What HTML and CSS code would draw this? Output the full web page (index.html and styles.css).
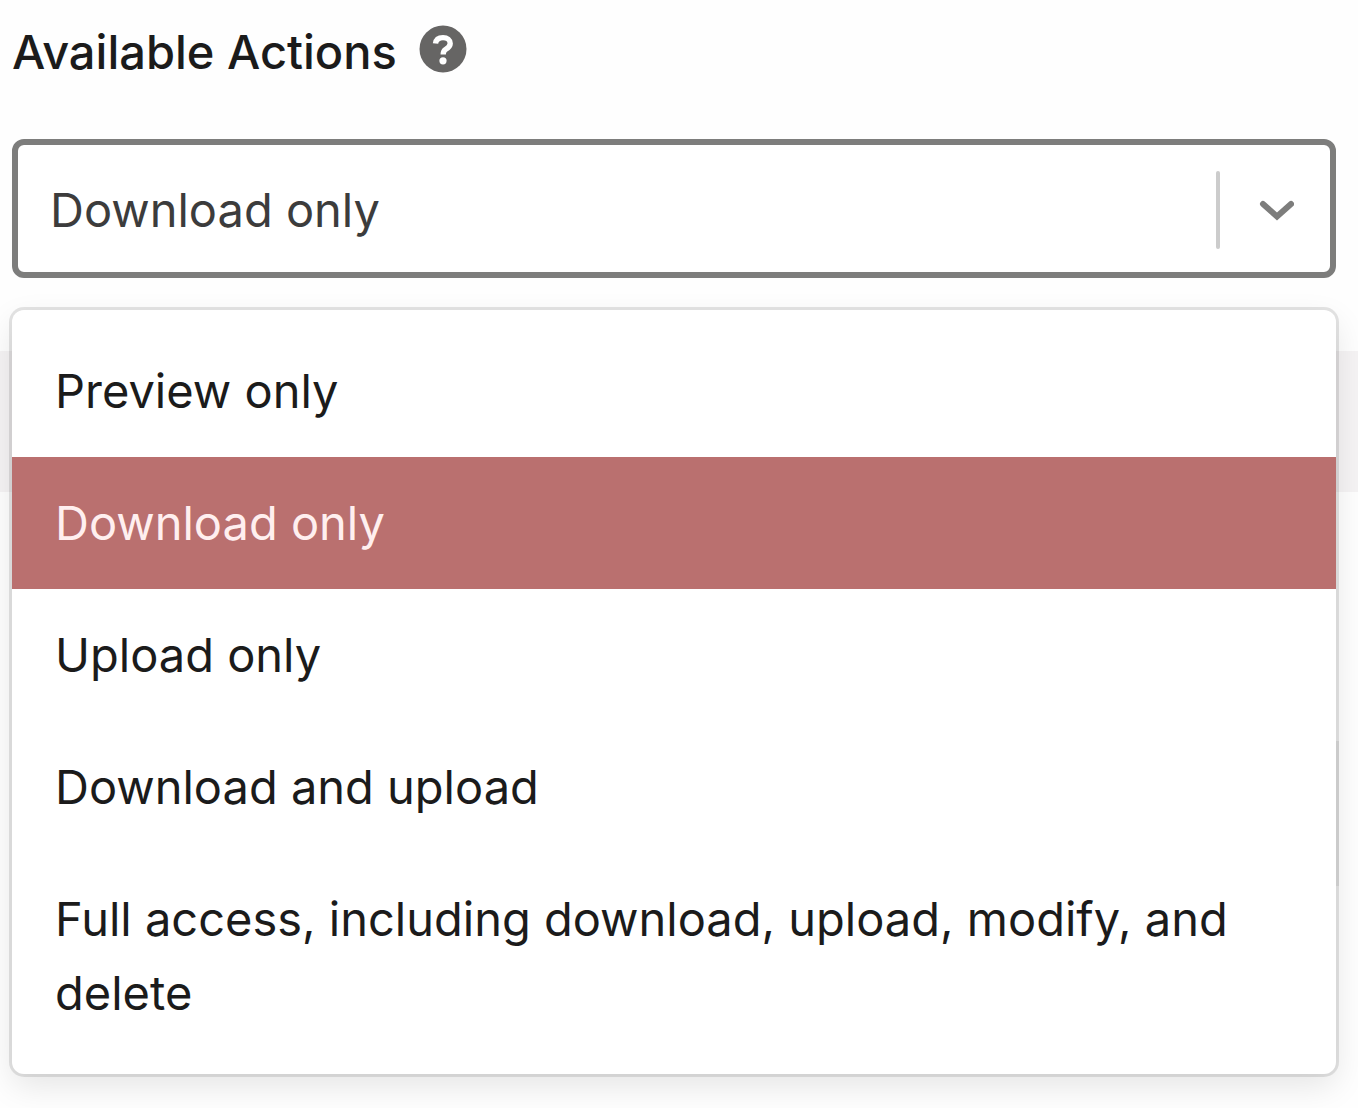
FILE: index.html
```html
<!DOCTYPE html>
<html lang="en">
<head>
<meta charset="utf-8">
<meta name="viewport" content="width=device-width, initial-scale=1">
<title>Available Actions</title>
<link rel="stylesheet" href="styles.css">
</head>
<body>
<main class="form">
  <div class="field">
    <div class="field-head">
      <label class="field-label" for="actions">Available Actions</label>
      <button class="help" type="button" aria-label="Help">
        <svg viewBox="0 0 48 48" aria-hidden="true">
          <circle cx="24" cy="24" r="23.5" fill="#666564"/>
          <path d="M16.5 18.5C17 14.2 19.8 12.6 24 12.6C28.4 12.6 31.2 15 31.2 18.4C31.2 21.5 29 23 26.5 24.5C24.8 25.6 24.2 26.5 24.2 29.5" fill="none" stroke="#fff" stroke-width="5.4"/>
          <circle cx="24" cy="35.8" r="3.6" fill="#fff"/>
        </svg>
      </button>
    </div>
    <div class="dropdown">
      <div class="control">
        <select class="control-select" id="actions">
          <option>Preview only</option>
          <option selected>Download only</option>
          <option>Upload only</option>
          <option>Download and upload</option>
          <option>Full access, including download, upload, modify, and delete</option>
        </select>
        <span class="separator"></span>
        <svg class="chevron" viewBox="0 0 36 24" aria-hidden="true">
          <path d="M5 6L19 18.500L33 6" fill="none" stroke="#7d7d7c" stroke-width="6" stroke-linecap="round"/>
        </svg>
      </div>
      <ul class="menu" role="listbox" aria-label="Available Actions">
        <li class="option" role="option" aria-selected="false">Preview only</li>
        <li class="option option-selected" role="option" aria-selected="true">Download only</li>
        <li class="option" role="option" aria-selected="false">Upload only</li>
        <li class="option" role="option" aria-selected="false">Download and upload</li>
        <li class="option" role="option" aria-selected="false">Full access, including download, upload, modify, and delete</li>
      </ul>
    </div>
  </div>
  <div class="band"></div>
  <div class="panel"></div>
</main>
</body>
</html>
```
FILE: styles.css
```css
* {
  box-sizing: border-box;
}

body {
  margin: 0;
  background: #fefefe;
  color: #1b1b1b;
  font-family: Inter, "Liberation Sans", sans-serif;
  font-size: 47px;
  line-height: 74px;
}

.form {
  min-height: 100vh;
  padding-bottom: 222px;
}

.field {
  padding: 15px 22px 0 12px;
}

.field-head {
  display: flex;
  align-items: flex-start;
  gap: 22px;
}

.field-label {
  font-weight: 500;
}

.help {
  width: 48px;
  height: 48px;
  margin-top: 10px;
  padding: 0;
  border: 0;
  background: none;
}

.help svg {
  display: block;
}

.dropdown {
  position: relative;
  margin-top: 50px;
}

.control {
  display: flex;
  align-items: center;
  height: 139px;
  padding: 3px 36px 0 0;
  border: 6px solid #7d7d7c;
  border-radius: 12px;
  background: #fff;
}

.control-select {
  flex: 1;
  min-width: 0;
  height: 100%;
  padding: 0 32px;
  border: 0;
  outline: 0;
  appearance: none;
  background: none;
  color: #3c3c3c;
  font: inherit;
}

.separator {
  width: 4px;
  height: 78px;
  border-radius: 2px;
  background: #ccc;
}

.chevron {
  width: 36px;
  height: 24px;
  margin-left: 38px;
}

/* Open menu, floating over the rest of the form */
.menu {
  position: absolute;
  top: 100%;
  left: 0;
  right: 0;
  margin: 32px 0 0;
  padding: 15px 0;
  list-style: none;
  border-radius: 12px;
  background: #fff;
  box-shadow: 0 0 0 3px rgba(0, 0, 0, 0.1), 0 12px 33px rgba(0, 0, 0, 0.1);
}

.option {
  padding: 29px 43px;
}

.option-selected {
  background: #ba706f;
  color: #ffefef;
}

.band {
  height: 141px;
  margin-top: 73px;
  background: #f5f3f4;
}

.panel {
  height: 145px;
  margin: 249px 19px 0 12px;
  border: 3px solid #eee;
}
```
